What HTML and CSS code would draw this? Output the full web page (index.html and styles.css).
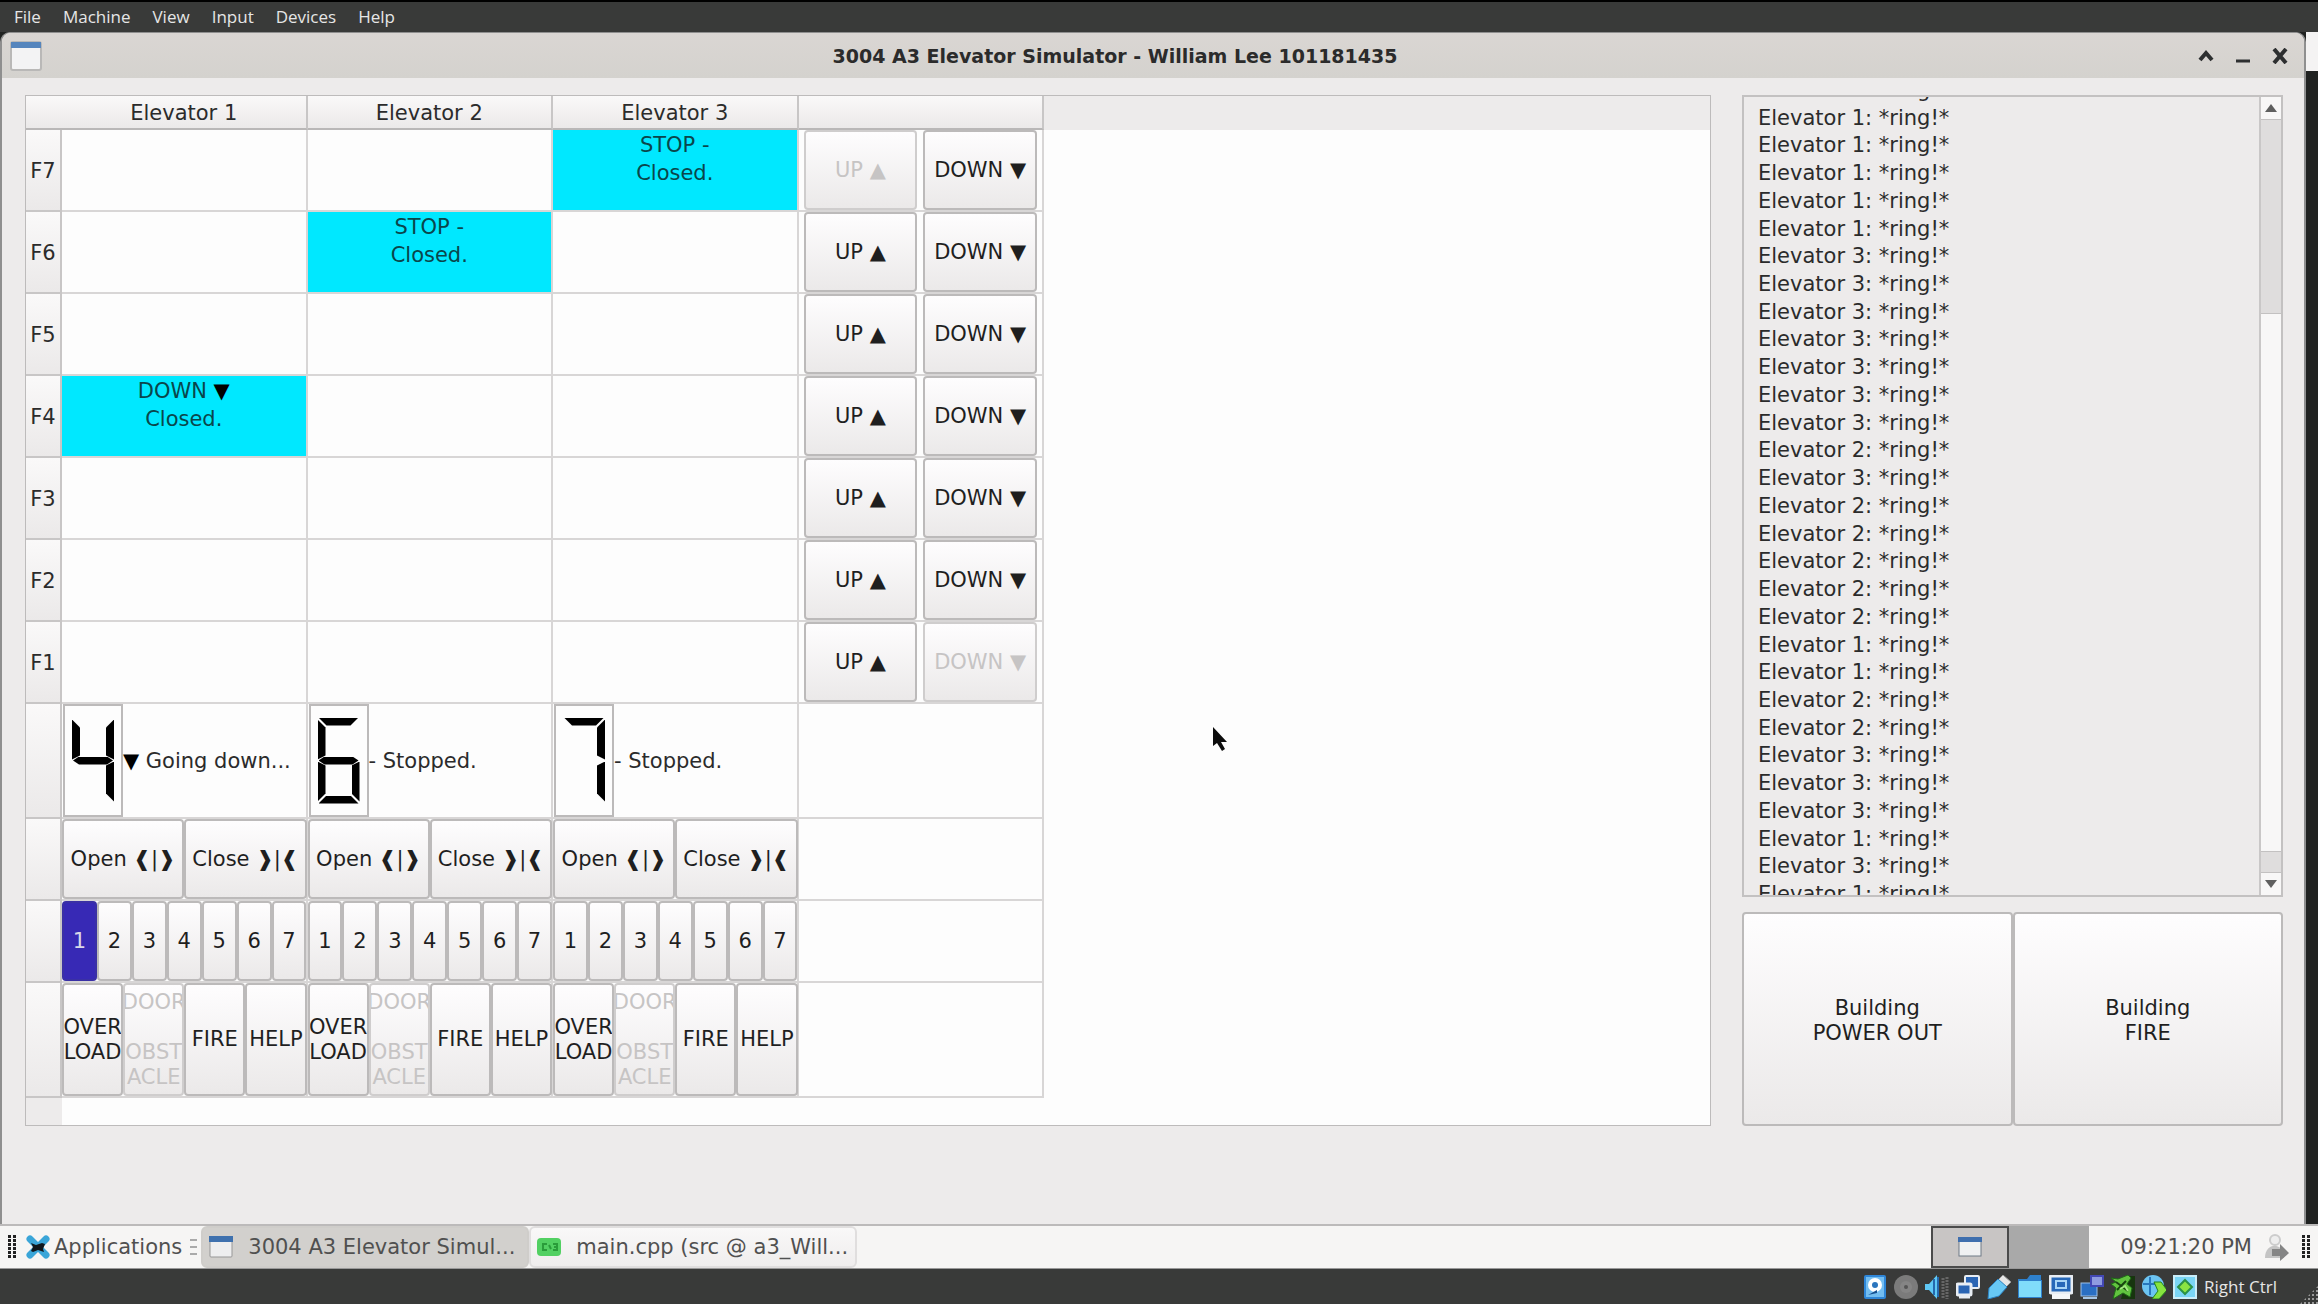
FILE: index.html
```html
<!DOCTYPE html>
<html lang="en">
<head>
<meta charset="utf-8">
<title>3004 A3 Elevator Simulator - William Lee 101181435</title>
<link rel="stylesheet" href="styles.css">
</head>
<body>
<nav class="menubar">
  <button>File</button><button>Machine</button><button>View</button><button>Input</button><button>Devices</button><button>Help</button>
</nav>

<main class="desktop">
  <section class="window">
    <header class="titlebar">
      <svg class="app-icon" viewBox="0 0 32 30" aria-hidden="true"><rect x="1" y="1" width="30" height="28" rx="2" fill="#f3f3f4" stroke="#b9b8b7" stroke-width="2"/><path d="M1 1h30v6H1z" fill="#5585bd"/></svg>
      <h1>3004 A3 Elevator Simulator - William Lee 101181435</h1>
      <div class="window-controls">
        <button aria-label="Roll up"><svg viewBox="0 0 16 16"><path d="M2 12l6-7 6 7" fill="none" stroke="#2d2f30" stroke-width="4"/></svg></button>
        <button aria-label="Minimize"><svg viewBox="0 0 16 16"><path d="M1 13h14" stroke="#2d2f30" stroke-width="3"/></svg></button>
        <button aria-label="Close"><svg viewBox="0 0 16 16"><path d="M2 1l12 14M14 1L2 15" stroke="#2d2f30" stroke-width="4"/></svg></button>
      </div>
    </header>

    <div class="content">
      <div class="board">
        <table>
          <colgroup><col class="col-floor"><col class="col-lift"><col class="col-lift"><col class="col-lift"><col class="col-lift"></colgroup>
          <thead><tr><th class="corner"></th><th>Elevator 1</th><th>Elevator 2</th><th>Elevator 3</th><th></th></tr></thead>
          <tbody>
            <tr><th>F7</th><td></td><td></td><td class="car">STOP -<br>Closed.</td><td><div class="calls"><button disabled>UP ▲</button><button>DOWN ▼</button></div></td></tr>
            <tr><th>F6</th><td></td><td class="car">STOP -<br>Closed.</td><td></td><td><div class="calls"><button>UP ▲</button><button>DOWN ▼</button></div></td></tr>
            <tr><th>F5</th><td></td><td></td><td></td><td><div class="calls"><button>UP ▲</button><button>DOWN ▼</button></div></td></tr>
            <tr><th>F4</th><td class="car">DOWN <b>▼</b><br>Closed.</td><td></td><td></td><td><div class="calls"><button>UP ▲</button><button>DOWN ▼</button></div></td></tr>
            <tr><th>F3</th><td></td><td></td><td></td><td><div class="calls"><button>UP ▲</button><button>DOWN ▼</button></div></td></tr>
            <tr><th>F2</th><td></td><td></td><td></td><td><div class="calls"><button>UP ▲</button><button>DOWN ▼</button></div></td></tr>
            <tr><th>F1</th><td></td><td></td><td></td><td><div class="calls"><button>UP ▲</button><button disabled>DOWN ▼</button></div></td></tr>
            <tr class="tall">
              <th></th>
              <td><div class="status"><div class="lcd" role="img" aria-label="4"><div class="digit"><i class="f"></i><i class="g"></i><i class="b"></i><i class="c"></i></div></div><span><b>▼</b> Going down...</span></div></td>
              <td><div class="status"><div class="lcd" role="img" aria-label="6"><div class="digit"><i class="a"></i><i class="f"></i><i class="g"></i><i class="e"></i><i class="c"></i><i class="d"></i></div></div><span>- Stopped.</span></div></td>
              <td><div class="status"><div class="lcd" role="img" aria-label="7"><div class="digit"><i class="a"></i><i class="b"></i><i class="c"></i></div></div><span>- Stopped.</span></div></td>
              <td></td>
            </tr>
            <tr>
              <th></th>
              <td><div class="keys"><button>Open ❰|❱</button><button>Close ❱|❰</button></div></td>
              <td><div class="keys"><button>Open ❰|❱</button><button>Close ❱|❰</button></div></td>
              <td><div class="keys"><button>Open ❰|❱</button><button>Close ❱|❰</button></div></td>
              <td></td>
            </tr>
            <tr>
              <th></th>
              <td><div class="keys"><button class="lit">1</button><button>2</button><button>3</button><button>4</button><button>5</button><button>6</button><button>7</button></div></td>
              <td><div class="keys"><button>1</button><button>2</button><button>3</button><button>4</button><button>5</button><button>6</button><button>7</button></div></td>
              <td><div class="keys"><button>1</button><button>2</button><button>3</button><button>4</button><button>5</button><button>6</button><button>7</button></div></td>
              <td></td>
            </tr>
            <tr class="tall">
              <th></th>
              <td><div class="keys"><button>OVER<br>LOAD</button><button disabled>DOOR<br><br>OBST<br>ACLE</button><button>FIRE</button><button>HELP</button></div></td>
              <td><div class="keys"><button>OVER<br>LOAD</button><button disabled>DOOR<br><br>OBST<br>ACLE</button><button>FIRE</button><button>HELP</button></div></td>
              <td><div class="keys"><button>OVER<br>LOAD</button><button disabled>DOOR<br><br>OBST<br>ACLE</button><button>FIRE</button><button>HELP</button></div></td>
              <td></td>
            </tr>
          </tbody>
          <tfoot><tr><th></th><td colspan="4"></td></tr></tfoot>
        </table>
      </div>

      <aside class="side">
        <div class="log">
          <ol>
            <li>Elevator 1: *ring!*</li><li>Elevator 1: *ring!*</li><li>Elevator 1: *ring!*</li><li>Elevator 1: *ring!*</li><li>Elevator 1: *ring!*</li><li>Elevator 1: *ring!*</li>
            <li>Elevator 3: *ring!*</li><li>Elevator 3: *ring!*</li><li>Elevator 3: *ring!*</li><li>Elevator 3: *ring!*</li><li>Elevator 3: *ring!*</li><li>Elevator 3: *ring!*</li><li>Elevator 3: *ring!*</li>
            <li>Elevator 2: *ring!*</li><li>Elevator 3: *ring!*</li>
            <li>Elevator 2: *ring!*</li><li>Elevator 2: *ring!*</li><li>Elevator 2: *ring!*</li><li>Elevator 2: *ring!*</li><li>Elevator 2: *ring!*</li>
            <li>Elevator 1: *ring!*</li><li>Elevator 1: *ring!*</li><li>Elevator 2: *ring!*</li><li>Elevator 2: *ring!*</li>
            <li>Elevator 3: *ring!*</li><li>Elevator 3: *ring!*</li><li>Elevator 3: *ring!*</li><li>Elevator 1: *ring!*</li><li>Elevator 3: *ring!*</li><li>Elevator 1: *ring!*</li>
          </ol>
          <div class="scrollbar">
            <button aria-label="Scroll up"><svg viewBox="0 0 12 8"><path d="M0 8l6-8 6 8z" fill="#5f5f5f"/></svg></button>
            <div class="track"><div class="thumb"></div></div>
            <button aria-label="Scroll down"><svg viewBox="0 0 12 8"><path d="M0 0l6 8 6-8z" fill="#5f5f5f"/></svg></button>
          </div>
        </div>
        <div class="building">
          <button>Building<br>POWER OUT</button><button>Building<br>FIRE</button>
        </div>
      </aside>
      <svg class="pointer" viewBox="0 0 14 26" aria-hidden="true"><path d="M0 0v19l4-3 5 8 3-2-4-7h6z" fill="#0c0c0c"/></svg>
    </div>
  </section>
  <div class="backdrop"></div>
</main>

<footer class="taskbar">
  <span class="handle"></span>
  <button class="apps">
    <svg viewBox="0 0 24 24" aria-hidden="true"><path d="M4 4l16 16M20 4L4 20" stroke="#3aa5d8" stroke-width="7" stroke-linecap="round"/><path d="M5 8l5 2 6-2 3 1-2 5 1 3-6-2-5 2-2-1 2-4z" fill="#10171c"/></svg>
    Applications
  </button>
  <span class="lines"></span>
  <button class="task active">
    <svg viewBox="0 0 24 22" aria-hidden="true"><rect x="1" y="1" width="22" height="20" rx="1" fill="#eeeeef" stroke="#979797"/><path d="M0 0h24v6H0z" fill="#3f71ae"/></svg>
    <span>3004 A3 Elevator Simul...</span>
  </button>
  <button class="task">
    <svg viewBox="0 0 24 22" aria-hidden="true"><rect x="0" y="2" width="24" height="18" rx="4" fill="#52d062"/><path d="M10 8H6v6h4M12 9l2 4M16 8h4v6h-4M17 11h3" stroke="#2a9c3a" stroke-width="2" fill="none"/></svg>
    <span>main.cpp (src @ a3_Will...</span>
  </button>
  <div class="tray">
    <button class="desk current" aria-label="Workspace 1"><svg viewBox="0 0 24 20"><rect x="1" y="1" width="22" height="18" fill="#f0f1f2" stroke="#6f7a86"/><path d="M0 0h24v5H0z" fill="#3f6fae"/></svg></button>
    <button class="desk" aria-label="Workspace 2"></button>
    <time>09:21:20 PM</time>
    <svg class="user" viewBox="0 0 26 28" aria-hidden="true"><circle cx="11" cy="7" r="5" fill="#eee" stroke="#ccc" stroke-width="2"/><path d="M1 25c0-16 18-16 19-2v2z" fill="#c4c4c4"/><path d="M8 16h8v-5l9 9-9 8v-5H8z" fill="#858585"/></svg>
    <span class="handle"></span>
  </div>
</footer>

<div class="hostbar">
  <svg viewBox="0 0 24 24"><rect x="1" y="0" width="22" height="24" rx="2" fill="#2f86d8"/><rect x="3" y="2" width="18" height="20" fill="#73bdf0"/><circle cx="12" cy="10" r="7" fill="#fff"/><circle cx="12" cy="10" r="3" fill="#2c76be"/><path d="M5 20l9-5v3z" fill="#154f8f"/></svg>
  <svg viewBox="0 0 24 24"><circle cx="12" cy="12" r="12" fill="#7b7b7b"/><circle cx="12" cy="12" r="6" fill="#858585"/><circle cx="12" cy="12" r="2" fill="#555"/></svg>
  <svg viewBox="0 0 24 24"><path d="M0 9h4l8-9v24l-8-9H0z" fill="#5fc8f5"/><path d="M9 4v16M13 2v20" stroke="#2569ae" stroke-width="2"/><path d="M18 3v20M22 2v22" stroke="#666" stroke-width="3" stroke-dasharray="2 1"/></svg>
  <svg viewBox="0 0 24 24"><rect x="9" y="1" width="14" height="12" rx="1" fill="#2a65b4" stroke="#e8edf3" stroke-width="2"/><rect x="1" y="9" width="14" height="11" rx="1" fill="#2a65b4" stroke="#e8edf3" stroke-width="3"/><path d="M3 22h11" stroke="#e8edf3" stroke-width="3"/></svg>
  <svg viewBox="0 0 24 24"><path d="M16 0l8 7-5 5-8-7z" fill="#e6e6e6" stroke="#999"/><path d="M11 4l9 8-8 9-11 3 1-11z" fill="#68c8f4" stroke="#2d83c4"/></svg>
  <svg viewBox="0 0 24 24"><path d="M0 4h9l3-4h11v5h1v18H0z" fill="#2e80cc"/><path d="M1 6h22v16H1z" fill="#80dcfa"/></svg>
  <svg viewBox="0 0 24 24"><rect x="1" y="1" width="22" height="17" rx="1" fill="#2768b8" stroke="#e8edf3" stroke-width="3"/><rect x="7" y="6" width="10" height="7" fill="#2768b8" stroke="#a8d5f5" stroke-width="2"/><path d="M3 19h18v5H3z" fill="#f4f6f8"/></svg>
  <svg viewBox="0 0 24 24"><rect x="1" y="8" width="16" height="13" fill="#2a6fc3" stroke="#9bc0e8"/><rect x="11" y="1" width="12" height="10" fill="#8f9be0" stroke="#4348b5" stroke-width="2"/><path d="M3 23h14" stroke="#a5c5e5" stroke-width="2"/></svg>
  <svg viewBox="0 0 24 24"><path d="M16 1h9v23H10z" fill="#17350f"/><path d="M0 3l7 1 10-4 3 3-4 6 5 4-2 9-7-4-10 6 3-11-5-4 5-2z" fill="#62c440" stroke="#1e6c16"/><path d="M5 7l12 9M15 6l-9 9" stroke="#17450f" stroke-width="2"/><path d="M9 14l5-3 3 5" fill="none" stroke="#a3ea80" stroke-width="2"/></svg>
  <svg viewBox="0 0 24 24"><circle cx="11" cy="11" r="11" fill="#6cc4f2"/><path d="M8 2v18M1 9h12" stroke="#2878bd" stroke-width="2"/><path d="M12 7h7l6 8-8 9h-7l6-8z" fill="#86e33f" stroke="#23831f"/></svg>
  <svg viewBox="0 0 24 24"><rect width="24" height="24" rx="1" fill="#7ad5f5"/><path d="M1 1h22v22H1z" fill="none" stroke="#c9edf9" stroke-width="2"/><path d="M12 5l7 7-7 7-7-7z" fill="#8ae343" stroke="#2b9148" stroke-width="2"/></svg>
  <span>Right Ctrl</span>
  <i class="grip"></i>
</div>
</body>
</html>
```
FILE: styles.css
```css
* { box-sizing: border-box; }

body {
  margin: 0;
  min-height: 100vh;
  display: flex;
  flex-direction: column;
  background: #393a39;
  color: #2b2b2b;
  font: 21px/28px "DejaVu Sans", sans-serif;
}

button {
  margin: 0;
  padding: 0;
  border: 0;
  background: none;
  color: inherit;
  font: inherit;
}

svg { display: block; flex: none; }

/* Host machine menu */
.menubar {
  height: 32px;
  display: flex;
  align-items: center;
  gap: 22px;
  padding: 0 14px;
  border-top: 2px solid #000;
  background: #393a39;
  color: #e6e6e6;
  font: 17px/24px "Open Sans", sans-serif;
}

/* Guest desktop */
.desktop {
  flex: 1;
  display: flex;
  background: #202221;
}

.backdrop {
  width: 12px;
  border-top: 39px solid #f4f3f3;
}

.window {
  flex: 1;
  display: flex;
  flex-direction: column;
  border: 2px solid #8f8f8f;
  border-width: 1px 2px 0;
  border-radius: 10px 10px 0 0;
  background: #edebeb;
  overflow: hidden;
}

.titlebar {
  height: 45px;
  display: grid;
  grid-template-columns: 1fr auto 1fr;
  align-items: center;
  padding: 0 16px 0 8px;
  background: linear-gradient(#dad6d3, #d4d2ce);
}

.titlebar h1 {
  margin: 0;
  padding-right: 68px;
  font-size: 19px;
  line-height: 28px;
}

.app-icon { width: 32px; height: 30px; }

.window-controls {
  display: flex;
  justify-content: flex-end;
  gap: 21px;
}

.window-controls svg { width: 16px; height: 16px; }

.content {
  position: relative;
  flex: 1;
  display: flex;
  align-items: flex-start;
  gap: 31px;
  padding: 17px 21px 0 23px;
}

/* Elevator board */
.board {
  flex: 1;
  border: 1px solid #bdbbbb;
  background: linear-gradient(#edebeb 34px, #fdfdfd 34px);
}

table {
  width: 1018px;
  table-layout: fixed;
  border-collapse: separate;
  border-spacing: 0;
}

.col-floor { width: 36px; }

th, td {
  height: 82px;
  padding: 0;
  border: 0 solid #d8d6d6;
  border-width: 0 2px 2px 0;
  text-align: center;
}

th {
  padding-top: 2px;
  border-color: #c8c6c6;
  background: linear-gradient(#faf9f9, #ebe9e9);
  font-weight: 400;
}

thead th {
  height: 34px;
  border-bottom-color: #b9b7b7;
}

thead .corner { border-right-width: 0; }
.tall > * { height: 115px; }

tfoot th, tfoot td {
  height: 27px;
  border: 0;
}

tfoot th { background: #edebeb; }

td.car {
  padding-top: 1px;
  background: #00e8ff;
  color: #0a464b;
  vertical-align: top;
}

b { color: #000; font-weight: 400; }

.calls, .keys {
  height: 100%;
  display: grid;
  grid-auto-flow: column;
  grid-auto-columns: minmax(0, 1fr);
}

.calls {
  gap: 6px;
  padding: 0 5px;
}

.keys { margin-right: -1px; }

.calls button, .keys button, .building button {
  border: 2px solid #bcbaba;
  border-radius: 4px;
  background: linear-gradient(#fefdfe, #ebe9e9);
  line-height: 25px;
  color: #1f1f1f;
  white-space: nowrap;
  overflow: hidden;
}

.keys button {
  display: flex;
  align-items: center;
  justify-content: center;
}

.calls button:disabled, .keys button:disabled {
  border-color: #cfcdcd;
  color: #c6c4c4;
}

.keys .lit {
  border-color: #3a30a5;
  background: #3729b5;
  color: #d8d8e8;
}

/* Seven-segment floor display */
.status {
  height: 100%;
  display: flex;
  align-items: center;
  padding-left: 1px;
}

.lcd {
  width: 60px;
  height: 100%;
  display: grid;
  align-items: center;
  padding-left: 7px;
  border: 2px solid #bcbaba;
}

.digit {
  position: relative;
  width: 42px;
  height: 86px;
}

.digit i { position: absolute; background: #000; }

.digit .a, .digit .d { left: 1px; width: 40px; height: 8px; }
.digit .a { top: 0; clip-path: polygon(0 0, 100% 0, 32px 100%, 8px 100%); }
.digit .d { bottom: 0; clip-path: polygon(8px 0, 32px 0, 100% 100%, 0 100%); }
.digit .g { top: 39px; left: 1px; width: 40px; height: 8px; clip-path: polygon(0 50%, 6px 0, 34px 0, 100% 50%, 34px 100%, 6px 100%); }
.digit .b, .digit .c, .digit .e, .digit .f { width: 8px; height: 40px; }
.digit .f { top: 2px; left: 0; clip-path: polygon(0 0, 100% 8px, 100% 36px, 0 100%); }
.digit .b { top: 2px; right: 0; clip-path: polygon(100% 0, 0 8px, 0 36px, 100% 100%); }
.digit .e { bottom: 2px; left: 0; clip-path: polygon(0 0, 100% 4px, 100% 32px, 0 100%); }
.digit .c { bottom: 2px; right: 0; clip-path: polygon(100% 0, 0 4px, 0 32px, 100% 100%); }

/* Event log and building controls */
.side {
  width: 541px;
  align-self: stretch;
  display: flex;
  flex-direction: column;
}

.log {
  height: 802px;
  display: flex;
  border: 2px solid #c3c1c1;
  overflow: hidden;
}

.log ol {
  flex: 1;
  height: 832px;
  display: grid;
  grid-auto-rows: minmax(0, 1fr);
  align-items: center;
  margin: -21px 0 0;
  padding: 0 0 0 14px;
  line-height: 24px;
  list-style: none;
}

.scrollbar {
  width: 22px;
  display: flex;
  flex-direction: column;
  border-left: 2px solid #c9c7c7;
}

.scrollbar button {
  height: 22px;
  display: grid;
  place-items: center;
  background: #f8f7f7;
}

.scrollbar svg { width: 12px; height: 8px; }

.track {
  flex: 1;
  padding: 193px 0 20px;
  border: 1px solid #c3c1c1;
  border-width: 1px 0;
  background: #dfdddd;
}

.thumb {
  height: 100%;
  border: 1px solid #c3c1c1;
  border-width: 1px 0;
  background: #f8f7f7;
}

.building {
  display: grid;
  grid-template-columns: 1fr 1fr;
  height: 214px;
  margin-top: 15px;
}

.building button { padding-top: 3px; }

.pointer {
  position: absolute;
  top: 649px;
  left: 52.6%;
  width: 14px;
  height: 26px;
}

/* Guest taskbar */
.taskbar {
  height: 45px;
  display: flex;
  align-items: stretch;
  padding: 0 8px;
  border-top: 2px solid #bcbaba;
  border-bottom: 1px solid #999;
  background: #f6f5f4;
  color: #505050;
}

.handle {
  align-self: center;
  width: 8px;
  height: 24px;
  background: repeating-linear-gradient(transparent 0 3px, #f6f5f4 3px 4px), linear-gradient(90deg, #222 3px, transparent 3px 5px, #222 5px);
}

.apps {
  display: flex;
  align-items: center;
  gap: 4px;
  padding-left: 10px;
}

.apps svg { width: 24px; height: 24px; }

.lines {
  align-self: center;
  width: 7px;
  height: 16px;
  margin: 0 4px 0 8px;
  background: repeating-linear-gradient(#aaa 0 2px, transparent 2px 7px);
}

.task {
  width: 328px;
  display: flex;
  align-items: center;
  gap: 15px;
  padding-left: 6px;
  border: 2px solid #e0dede;
  border-radius: 6px;
  background: linear-gradient(#f9f8f8, #efeded);
  white-space: nowrap;
}

.task.active {
  border-color: #cfcdca;
  background: #d2d0cd;
}

.task svg { width: 24px; height: 22px; }

.tray {
  flex: 1;
  display: flex;
  align-items: center;
  justify-content: flex-end;
}

.desk {
  align-self: stretch;
  width: 80px;
  background: #a9a9a9;
}

.desk.current {
  width: 78px;
  display: grid;
  place-items: center;
  border: 2px solid #4b4b4b;
  background: #c8c5c4;
}

.desk svg { width: 24px; height: 20px; }
.tray time { margin: 0 12px 0 31px; }
.user { width: 26px; height: 28px; margin-right: 12px; }

/* Host status bar */
.hostbar {
  height: 35px;
  display: flex;
  align-items: center;
  justify-content: flex-end;
  gap: 7px;
  color: #e6e6e6;
  font: 17px/24px "Open Sans", sans-serif;
}

.hostbar svg { width: 24px; height: 24px; }

.grip {
  align-self: flex-end;
  width: 18px;
  height: 18px;
  margin-left: 16px;
  background: repeating-linear-gradient(transparent 0 2px, #393a39 2px 4px), repeating-linear-gradient(90deg, #999 0 2px, #393a39 2px 4px);
  clip-path: polygon(100% 0, 100% 100%, 0 100%);
}
```
